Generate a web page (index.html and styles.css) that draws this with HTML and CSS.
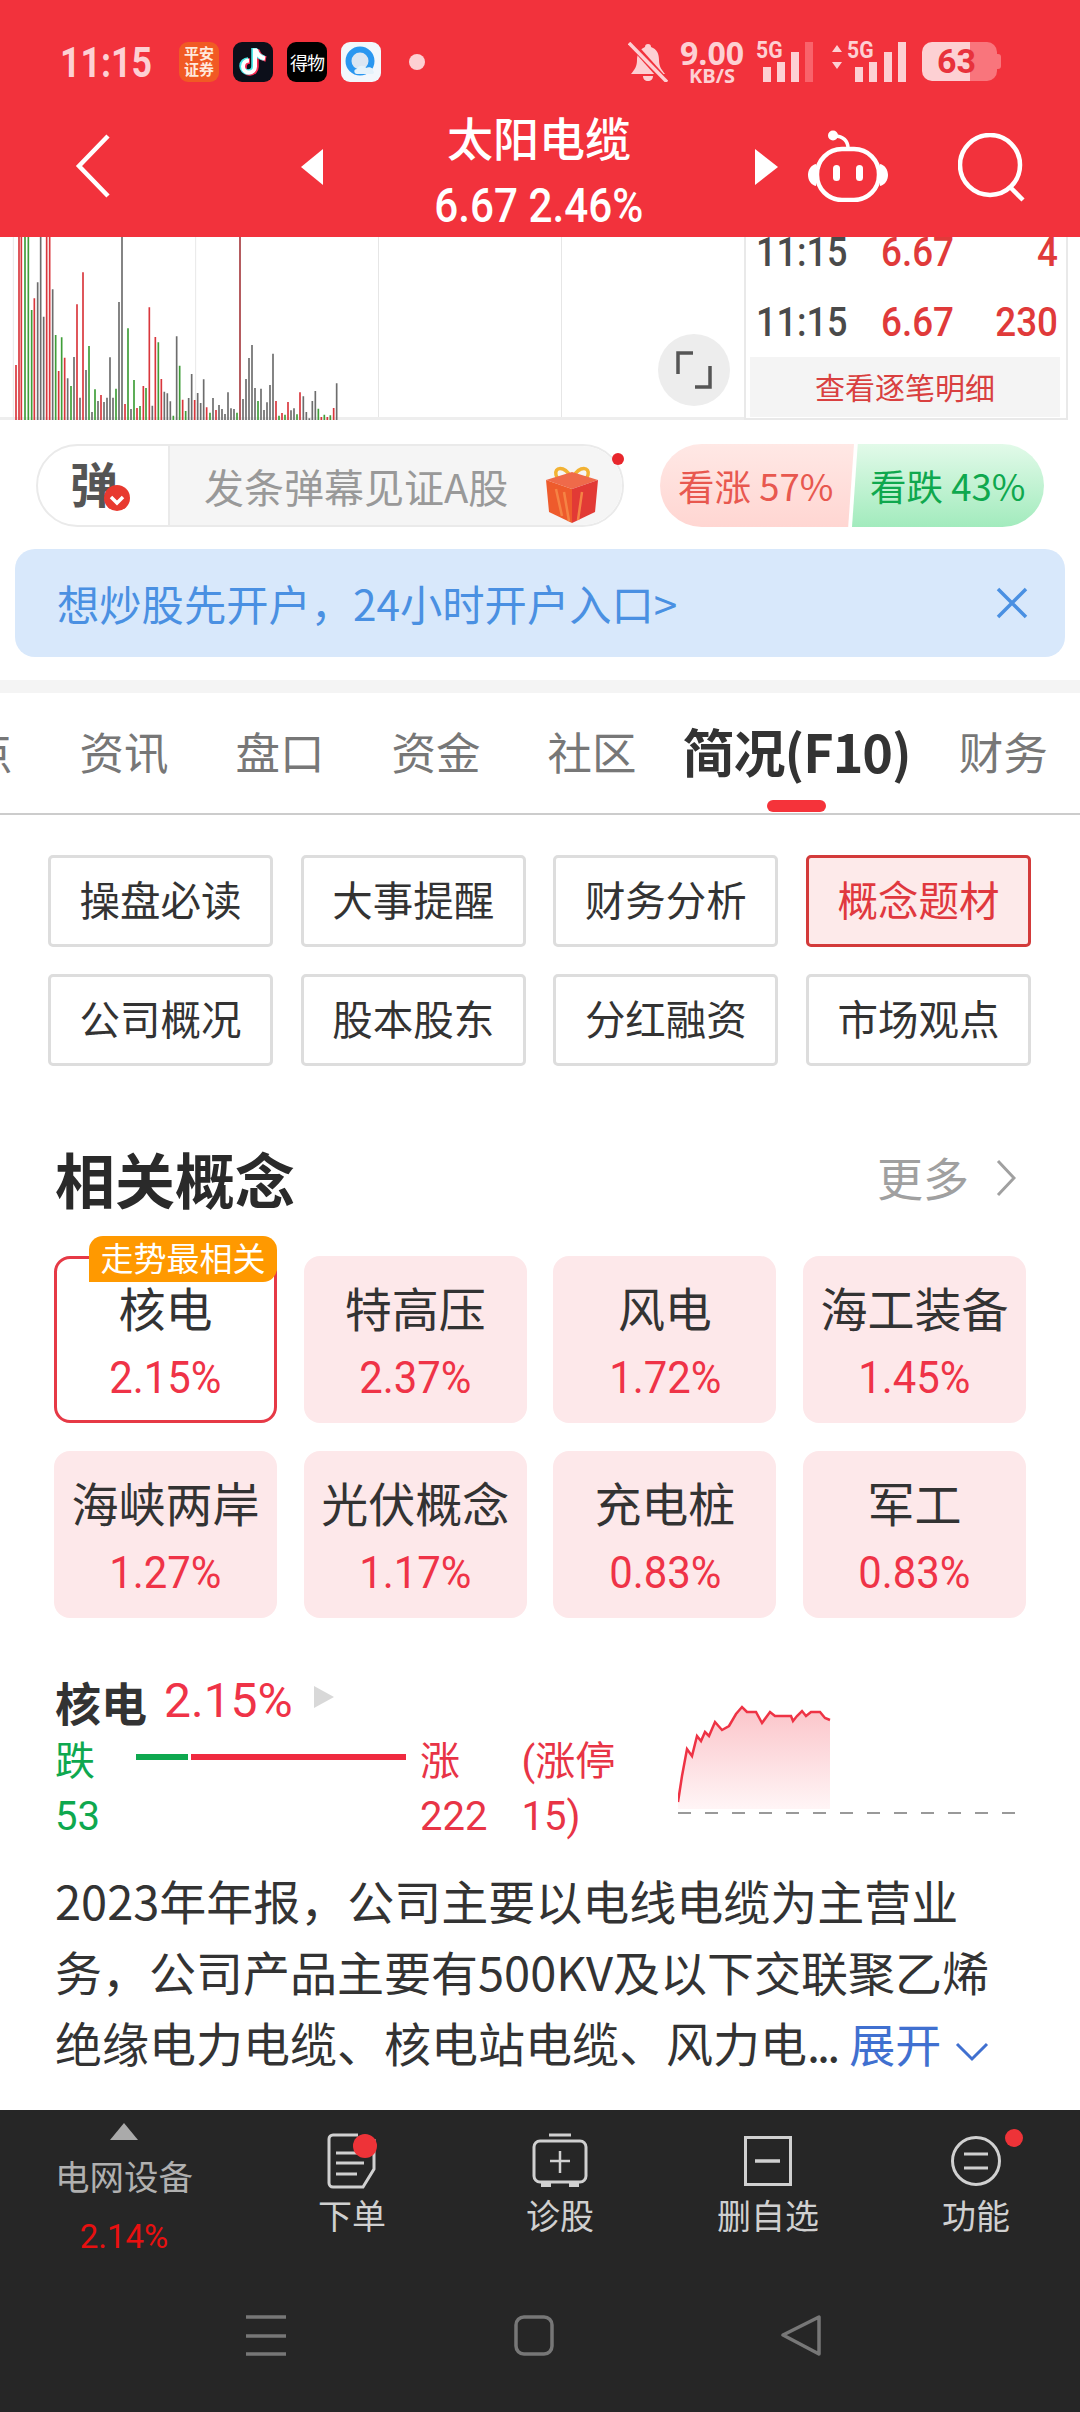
FILE: index.html
```html
<!DOCTYPE html>
<html lang="zh-CN">
<head>
<meta charset="utf-8">
<title>太阳电缆</title>
<link rel="stylesheet" href="styles.css">
</head>
<body>
<div class="page">
  <header class="header">
    <div class="status">
      <span class="time">11:15</span>
      <div class="apps">
        <span class="app app-pa">平安<br>证券</span>
        <span class="app app-tk"><svg viewBox="0 0 40 40" width="40" height="40"><path d="M23 7v18a6 6 0 1 1-6-6" fill="none" stroke="#ff2d55" stroke-width="5.5"/><path d="M24 8c1 5 4 8 9 9" fill="none" stroke="#ff2d55" stroke-width="5.5"/><path d="M21 6v18a6 6 0 1 1-6-6" fill="none" stroke="#4de8e8" stroke-width="5.5"/><path d="M22 7c1 5 4 8 9 9" fill="none" stroke="#4de8e8" stroke-width="5.5"/><path d="M22 6.500v18a6 6 0 1 1-6-6" fill="none" stroke="#fff" stroke-width="4"/><path d="M23 7.500c1 5 4 8 9 9" fill="none" stroke="#fff" stroke-width="4"/></svg></span>
        <span class="app app-dw">得物</span>
        <span class="app app-qq"><svg viewBox="0 0 40 40" width="40" height="40"><circle cx="19" cy="19" r="11.500" fill="#dbe6f2" stroke="#2a97f0" stroke-width="6"/><path d="M16 32c-3 0-4-5 0-5 1-4 8-4 9-1 3-2 8 0 7 3 2 1 1 3-1 3z" fill="#e4f2fb"/></svg></span>
      </div>
      <span class="dot"></span>
      <div class="sys">
        <svg class="bell" viewBox="0 0 40 40" width="40" height="40"><path d="M20 2c2 0 3 1 3 3 6 2 8 7 8 13 0 6 2 9 6 14H3c4-5 6-8 6-14 0-6 3-11 8-13 0-2 1-3 3-3zM15 34h10c0 3-2 5-5 5s-5-2-5-5z" fill="#fdd0d3"/><path d="M3 1l35 39" stroke="#f2323c" stroke-width="7"/><path d="M1 1l38 39" stroke="#fdd0d3" stroke-width="3.500"/></svg>
        <div class="speed"><span class="speed-n">9.00</span><span class="speed-u">KB/S</span></div>
        <div class="sig sig-a">
          <span class="g5">5G</span>
          <svg viewBox="0 0 52 40" width="52" height="40"><path d="M1 25h8v15H1zM15 20h8v20h-8zM29 10h8v30h-8z" fill="#fdd0d3"/><path d="M43 0h8v40h-8z" fill="#f9636b"/></svg>
        </div>
        <div class="sig sig-b">
          <svg class="arrows" viewBox="0 0 12 28" width="12" height="28"><path d="M6 2l5 7H1zM6 26l5-7H1z" fill="#fdd0d3"/></svg>
          <span class="g5">5G</span>
          <svg viewBox="0 0 52 40" width="52" height="40"><path d="M1 25h8v15H1zM15 20h8v20h-8zM30 10h8v30h-8zM44 0h8v40h-8z" fill="#fdd0d3"/></svg>
        </div>
        <div class="batt"><span class="batt-n">63</span></div>
      </div>
    </div>
    <div class="nav">
      <svg class="back" viewBox="0 0 36 66" width="36" height="66"><path d="M33 3L4 33l29 30" fill="none" stroke="#fff" stroke-width="4.500"/></svg>
      <svg class="tri-l" viewBox="0 0 22 36" width="22" height="36"><path d="M22 0v36L0 18z" fill="#fff"/></svg>
      <div class="title">
        <div class="title-name">太阳电缆</div>
        <div class="title-quote"><span>6.67 2.46%</span></div>
      </div>
      <svg class="tri-r" viewBox="0 0 23 36" width="23" height="36"><path d="M0 0v36l23-18z" fill="#fff"/></svg>
      <svg class="robot" viewBox="0 0 80 72" width="80" height="72"><circle cx="25" cy="5.500" r="5" fill="#fff"/><path d="M27 6c8 0 13 5 13 12" fill="none" stroke="#fff" stroke-width="3.500"/><rect x="9" y="19" width="62" height="51" rx="25" fill="none" stroke="#fff" stroke-width="4.500"/><path d="M8 34c-5 1-8 6-8 11s3 10 8 11zM72 34c5 1 8 6 8 11s-3 10-8 11z" fill="#fff"/><rect x="25" y="35" width="7" height="16" rx="3.500" fill="#fff"/><rect x="48" y="35" width="7" height="16" rx="3.500" fill="#fff"/></svg>
      <svg class="search" viewBox="0 0 68 70" width="68" height="70"><circle cx="32" cy="32" r="30" fill="none" stroke="#fff" stroke-width="4.500"/><path d="M52 54l13 13" stroke="#fff" stroke-width="4.500"/></svg>
    </div>
  </header>

  <section class="market">
    <div class="chart">
      <svg class="vol" viewBox="0 0 1080 570" width="360" height="190" preserveAspectRatio="none">
        <path d="M40 0V570M587 0V570" stroke="#e8e8e8" stroke-width="3"/>
        <path fill="none" stroke="#d9363c" stroke-width="5" d="M48 405V570M57 0V570M64 0V570M103 205V570M140 0V570M149 0V570M176 423V570M194 383V570M231 223V570M249 127V570M303 495V570M375 522V570M411 534V570M430 468V570M448 232V570M466 321V570M484 447V570M548 509V570M584 510V570M620 532V570M648 540V570M828 513V570M846 549V570M864 516V570M900 487V570M964 561V570M982 561V570M1001 534V570"/>
        <path fill="none" stroke="#b55c60" stroke-width="6" d="M720 0V570"/>
        <path fill="none" stroke="#3f9e38" stroke-width="5" d="M75 0V570M85 0V570M95 240V570M167 315V570M185 322V570M213 468V570M267 348V570M285 478V570M348 476V570M384 295V570M402 450V570M420 528V570M438 474V570M475 337V570M520 557V570M539 407V570M557 543V570M630 548V570M711 548V570M774 513V570M837 557V570M855 554V570M891 553V570M955 536V570M973 554V570M991 556V570"/>
        <path fill="none" stroke="#6d6d6d" stroke-width="5" d="M113 157V570M122 0V570M131 260V570M158 178V570M203 445V570M222 381V570M240 503V570M258 420V570M276 546V570M294 513V570M312 516V570M321 503V570M330 382V570M339 503V570M357 216V570M366 0V570M393 537V570M457 527V570M493 485V570M502 490V570M511 514V570M530 319V570M566 504V570M575 432V570M593 489V570M602 519V570M611 448V570M639 504V570M657 525V570M666 537V570M675 552V570M684 487V570M693 535V570M702 537V570M729 507V570M738 447V570M747 384V570M756 345V570M765 474V570M783 476V570M792 540V570M801 517V570M810 465V570M819 371V570M873 541V570M882 535V570M910 499V570M919 546V570M928 565V570M937 513V570M946 483V570M1010 460V570"/>
      </svg>
      <div class="grid-line grid-a"></div>
      <div class="grid-line grid-b"></div>
      <button class="expand"><svg viewBox="0 0 36 40" width="36" height="40"><path d="M2 24V3h15M34 16v21H19" fill="none" stroke="#555" stroke-width="3.500"/></svg></button>
    </div>
    <div class="ticks">
      <div class="tick"><span class="t-time">11:15</span><span class="t-price">6.67</span><span class="t-vol">4</span></div>
      <div class="tick"><span class="t-time">11:15</span><span class="t-price">6.67</span><span class="t-vol">230</span></div>
      <div class="tick-more">查看逐笔明细</div>
    </div>
  </section>

  <section class="engage">
    <div class="danmu">
      <div class="danmu-l"><span class="danmu-c">弹</span><svg class="danmu-ok" viewBox="0 0 26 26" width="26" height="26"><circle cx="13" cy="13" r="13" fill="#e8392f"/><path d="M7 12l6 6 6-6" fill="none" stroke="#fff" stroke-width="3.500"/></svg></div>
      <div class="danmu-r">
        <span class="danmu-t">发条弹幕见证A股</span>
        <svg class="gift" viewBox="0 0 56 58" width="56" height="58"><path d="M27 12C20 0 10 2 12 10c1 5 9 5 15 4zM29 12C36 0 46 2 44 10c-1 5-9 5-15 4z" fill="none" stroke="#f2b233" stroke-width="3.500"/><path d="M2 15l26-8 26 8-26 9z" fill="#ef6a4a"/><path d="M2 15l26 9v34L5 47z" fill="#ee5b2c"/><path d="M54 15L28 24v34l23-11z" fill="#e23a35"/><path d="M12 24l6 27M20 27l5 29M38 27l-4 28" stroke="#f58344" stroke-width="2.500"/></svg>
      </div>
      <span class="danmu-dot"></span>
    </div>
    <div class="vote">
      <div class="vote-up">看涨 57%</div>
      <div class="vote-down">看跌 43%</div>
    </div>
  </section>

  <section class="banner">
    <span class="banner-t">想炒股先开户，24小时开户入口&gt;</span>
    <svg class="banner-x" viewBox="0 0 32 32" width="32" height="32"><path d="M2 2l28 28M30 2L2 30" stroke="#4a90e2" stroke-width="3.500"/></svg>
  </section>

  <div class="sep"></div>

  <nav class="tabs">
    <span class="tab tab-cut">点</span>
    <span class="tab">资讯</span>
    <span class="tab">盘口</span>
    <span class="tab">资金</span>
    <span class="tab">社区</span>
    <span class="tab tab-on">简况(F10)</span>
    <span class="tab">财务</span>
  </nav>

  <section class="subs">
    <a class="sub">操盘必读</a><a class="sub">大事提醒</a><a class="sub">财务分析</a><a class="sub sub-on">概念题材</a>
    <a class="sub">公司概况</a><a class="sub">股本股东</a><a class="sub">分红融资</a><a class="sub">市场观点</a>
  </section>

  <section class="concept-head">
    <h2 class="concept-h">相关概念</h2>
    <div class="more"><span class="more-t">更多</span><svg viewBox="0 0 20 38" width="20" height="38"><path d="M2 2l16 17L2 36" fill="none" stroke="#a0a0a0" stroke-width="3"/></svg></div>
  </section>

  <section class="cards">
    <div class="card card-on"><span class="badge">走势最相关</span><div class="c-name">核电</div><div class="c-pct"><span>2.15%</span></div></div>
    <div class="card"><div class="c-name">特高压</div><div class="c-pct"><span>2.37%</span></div></div>
    <div class="card"><div class="c-name">风电</div><div class="c-pct"><span>1.72%</span></div></div>
    <div class="card"><div class="c-name">海工装备</div><div class="c-pct"><span>1.45%</span></div></div>
    <div class="card"><div class="c-name">海峡两岸</div><div class="c-pct"><span>1.27%</span></div></div>
    <div class="card"><div class="c-name">光伏概念</div><div class="c-pct"><span>1.17%</span></div></div>
    <div class="card"><div class="c-name">充电桩</div><div class="c-pct"><span>0.83%</span></div></div>
    <div class="card"><div class="c-name">军工</div><div class="c-pct"><span>0.83%</span></div></div>
  </section>

  <section class="detail">
    <div class="detail-l">
      <div class="d-head"><b class="d-name">核电</b><span class="d-pct">2.15%</span><svg viewBox="0 0 20 22" width="20" height="22"><path d="M0 0v22l20-11z" fill="#d8d8d8"/></svg></div>
      <div class="breadth">
        <div class="b-col b-down">跌<br>53</div>
        <div class="b-bar"><i class="b-g"></i><i class="b-r"></i></div>
        <div class="b-col b-up">涨<br>222</div>
        <div class="b-col b-up b-stop">(涨停<br>15)</div>
      </div>
    </div>
    <svg class="mini" viewBox="678 1700 340 120" width="340" height="120">
      <defs><linearGradient id="miniFill" x1="0" y1="0" x2="0" y2="1"><stop offset="0" stop-color="#fbc4c9"/><stop offset="1" stop-color="#fff5f6"/></linearGradient></defs>
      <path fill="url(#miniFill)" d="M678 1810V1803L682 1777 687 1750 692 1757 697 1737 701 1742 705 1733 709 1737 715 1723 722 1731 729 1727 736 1715 742 1708 747 1713 756 1713 762 1724 770 1713 775 1717 791 1717 793 1722 797 1717 802 1712 806 1717 811 1713 820 1713 825 1719 830 1721V1810Z"/>
      <path fill="none" stroke="#ee3345" stroke-width="2.500" d="M678 1803L682 1777 687 1750 692 1757 697 1737 701 1742 705 1733 709 1737 715 1723 722 1731 729 1727 736 1715 742 1708 747 1713 756 1713 762 1724 770 1713 775 1717 791 1717 793 1722 797 1717 802 1712 806 1717 811 1713 820 1713 825 1719 830 1721"/>
      <path d="M678 1814H1016" stroke="#999" stroke-width="2" stroke-dasharray="13 14"/>
    </svg>
  </section>

  <p class="intro">2023年年报，公司主要以电线电缆为主营业<br>务，公司产品主要有500KV及以下交联聚乙烯<br>绝缘电力电缆、核电站电缆、风力电<span class="intro-dots">...</span><span class="intro-more">展开</span><svg class="intro-chev" viewBox="0 0 34 20" width="34" height="20"><path d="M2 2l15 15L32 2" fill="none" stroke="#4070d0" stroke-width="3"/></svg></p>

  <footer class="bottom">
    <div class="tools">
      <div class="tool tool-idx">
        <svg viewBox="0 0 28 17" width="28" height="17"><path d="M14 0l14 17H0z" fill="#aaa"/></svg>
        <span class="idx-n">电网设备</span>
        <span class="idx-p">2.14%</span>
      </div>
      <div class="tool">
        <span class="t-ico"><svg viewBox="0 0 50 56" width="50" height="56"><path d="M31 2H6a4 4 0 0 0-4 4v44a4 4 0 0 0 4 4h30l11-18V6" fill="none" stroke="#d0d0d0" stroke-width="3"/><path d="M9 20h21M9 30h28M9 41h21" stroke="#d0d0d0" stroke-width="3"/><ellipse cx="38" cy="13" rx="12" ry="12" fill="#ee3338"/></svg></span>
        <span class="t-lab">下单</span>
      </div>
      <div class="tool">
        <span class="t-ico"><svg viewBox="0 0 56 56" width="56" height="56"><path d="M17 2h22" stroke="#d0d0d0" stroke-width="3"/><rect x="2" y="8" width="52" height="41" rx="6" fill="none" stroke="#d0d0d0" stroke-width="3"/><path d="M28 18v22M18 28h20" stroke="#d0d0d0" stroke-width="2.500"/><path d="M9 50h10v4H9zM37 50h10v4H37z" fill="#d0d0d0"/></svg></span>
        <span class="t-lab">诊股</span>
      </div>
      <div class="tool">
        <span class="t-ico"><svg viewBox="0 0 48 50" width="48" height="50"><rect x="1.500" y="1.500" width="45" height="47" fill="none" stroke="#d0d0d0" stroke-width="3"/><path d="M11 25h25" stroke="#d0d0d0" stroke-width="3.500"/></svg></span>
        <span class="t-lab">删自选</span>
      </div>
      <div class="tool">
        <span class="t-ico"><svg viewBox="0 0 50 52" width="50" height="52"><circle cx="25" cy="26" r="23.500" fill="none" stroke="#d0d0d0" stroke-width="3"/><path d="M13 19h24M13 33h24" stroke="#d0d0d0" stroke-width="3"/></svg><span class="t-badge"></span></span>
        <span class="t-lab">功能</span>
      </div>
    </div>
    <div class="sysnav">
      <svg viewBox="0 0 42 41" width="42" height="41"><path d="M1 2h40M1 21h40M1 39h40" stroke="#777" stroke-width="3.500"/></svg>
      <svg viewBox="0 0 40 41" width="40" height="41"><rect x="2" y="2" width="36" height="37" rx="8" fill="none" stroke="#777" stroke-width="3.500"/></svg>
      <svg viewBox="0 0 40 41" width="40" height="41"><path d="M38 2v37L2 20z" fill="none" stroke="#777" stroke-width="3.500" stroke-linejoin="round"/></svg>
    </div>
  </footer>
</div>
</body>
</html>
```
FILE: styles.css
```css
* { box-sizing: border-box; }
html, body { margin: 0; padding: 0; }
body { background: #fff; font-family: Roboto, "Noto Sans CJK SC", sans-serif; color: #333; }
.page { width: 1080px; height: 2412px; overflow: hidden; display: flex; flex-direction: column; }
svg { display: block; flex: none; }

.header { height: 237px; background: #f2323c; position: relative; z-index: 2; flex: none; }
.status { height: 104px; padding: 40px 0 0 60px; display: flex; align-items: flex-start; color: #fdd0d3; }
.time { font-size: 43px; font-weight: 700; line-height: 44px; width: 119px; transform: scaleX(.83); transform-origin: left; }
.apps { display: flex; gap: 14px; margin-top: 2px; }
.app { width: 40px; height: 40px; border-radius: 9px; overflow: hidden; display: flex; align-items: center; justify-content: center; text-align: center; }
.app-pa { background: #f15a24; color: #ffe9dc; font-size: 15px; line-height: 16px; font-weight: 700; }
.app-tk { background: #0c0f1a; }
.app-dw { background: #000; color: #fff; font-size: 18px; letter-spacing: -1px; }
.app-qq { background: #f2f7fc; }
.dot { width: 16px; height: 16px; border-radius: 50%; background: #fdd0d3; margin: 14px 0 0 28px; }
.sys { display: flex; align-items: flex-start; margin-left: 203px; margin-top: 2px; }
.speed { margin-left: 11px; width: 66px; display: flex; flex-direction: column; align-items: center; font-weight: 700; font-family: "Open Sans", sans-serif; }
.speed-n { font-size: 32px; line-height: 22px; }
.speed-u { font-size: 20px; line-height: 18px; margin-top: 3px; }
.sig { position: relative; height: 40px; display: flex; }
.sig-a { margin-left: 17px; width: 52px; }
.g5 { position: absolute; top: 0; font-size: 23px; line-height: 17px; font-weight: 700; transform: scaleX(.92); transform-origin: left; }
.sig-a .g5 { left: -6px; }
.sig-b { margin-left: 17px; width: 75px; justify-content: flex-end; }
.sig-b .g5 { left: 16px; }
.arrows { position: absolute; left: 0; top: 1px; }
.batt { margin-left: 16px; width: 75px; height: 39px; border-radius: 10px; background: linear-gradient(90deg, #fdd0d3 0 48px, #f9757c 48px); text-align: center; position: relative; }
.batt::after { content: ""; position: absolute; right: -4px; top: 12px; width: 4px; height: 15px; border-radius: 0 3px 3px 0; background: #f9757c; }
.batt-n { font-size: 34px; line-height: 39px; font-weight: 700; color: #e8323c; display: block; margin-right: 6px; }

.nav { height: 133px; display: flex; align-items: flex-start; padding-left: 75px; color: #fff; }
.back { margin-top: 29px; }
.tri-l { margin: 45px 0 0 190px; }
.title { width: 432px; text-align: center; padding-top: 5px; font-family: "Noto Sans CJK SC", sans-serif; }
.title-name { font-size: 46px; line-height: 54px; font-weight: 500; }
.title-quote { font-family: Roboto, sans-serif; font-size: 48px; line-height: 50px; margin-top: 18px; font-weight: 500; }
.title-quote span { display: inline-block; transform: scaleX(.88); }
.tri-r { margin-top: 45px; }
.robot { margin: 26px 0 0 30px; }
.search { margin: 29px 0 0 70px; }

.market { height: 183px; display: flex; flex: none; overflow: hidden; position: relative; }
.chart { width: 744px; position: relative; border-bottom: 3px solid #eee; }
.vol { position: absolute; left: 0; top: -7px; }
.grid-line { position: absolute; top: 0; bottom: 0; width: 1px; background: #e6e6e6; }
.grid-a { left: 378px; }
.grid-b { left: 561px; }
.expand { position: absolute; left: 658px; top: 97px; width: 72px; height: 72px; border: 0; border-radius: 50%; background: #ededed; display: flex; align-items: center; justify-content: center; padding: 0; }
.ticks { width: 324px; border-left: 2px solid #e9e9e9; border-right: 2px solid #e9e9e9; border-bottom: 2px solid #e9e9e9; margin-top: -20px; height: 203px; padding: 0 6px 0 4px; }
.tick { height: 70px; display: flex; align-items: center; font-size: 40px; font-weight: 500; }
.t-time { color: #4a4a4a; width: 125px; margin-left: 6px; transform: scaleX(.9); transform-origin: left; }
.t-price { color: #e03a3a; width: 80px; transform: scaleX(.92); transform-origin: left; }
.t-vol { color: #e03a3a; flex: 1; text-align: right; margin-right: 2px; transform: scaleX(.92); transform-origin: right; }
.tick-more { height: 60px; background: #f4f4f4; color: #d94040; font: 30px/58px "Noto Sans CJK SC", sans-serif; text-align: center; }

.engage { height: 83px; margin-top: 24px; padding-left: 36px; display: flex; flex: none; }
.danmu { width: 588px; display: flex; border: 2px solid #eaeaea; border-radius: 42px; position: relative; }
.danmu-l { width: 132px; position: relative; border-right: 2px solid #eaeaea; }
.danmu-c { position: absolute; left: 32px; top: 6px; font: 700 48px/60px "Noto Sans CJK SC", sans-serif; color: #555; }
.danmu-ok { position: absolute; left: 66px; top: 39px; }
.danmu-r { flex: 1; background: #f5f5f5; border-radius: 0 41px 41px 0; display: flex; align-items: center; justify-content: space-between; padding: 0 22px 0 34px; }
.danmu-t { font: 40px/1 "Noto Sans CJK SC", sans-serif; color: #999; }
.gift { margin-top: 16px; }
.danmu-dot { position: absolute; right: -2px; top: 7px; width: 12px; height: 12px; border-radius: 50%; background: #e8262c; }
.vote { margin-left: 36px; width: 384px; display: flex; font: 36.500px/83px "Noto Sans CJK SC", sans-serif; }
.vote-up { width: 194px; background: linear-gradient(180deg, #ffe8e5, #ffd6d2); color: #e8584f; border-radius: 42px 0 0 42px; clip-path: polygon(0 0, 100% 0, 97% 100%, 0 100%); padding-left: 18px; white-space: nowrap; }
.vote-down { width: 192px; margin-left: -2px; background: linear-gradient(180deg, #e2fae9, #a2ebbd); color: #0fa84e; border-radius: 0 42px 42px 0; clip-path: polygon(3% 0, 100% 0, 100% 100%, 0 100%); padding-left: 18px; white-space: nowrap; }

.banner { height: 108px; margin: 22px 15px 0; flex: none; background: #d8e8fb; border-radius: 20px; display: flex; align-items: center; justify-content: space-between; padding: 0 37px 0 42px; }
.banner-t { font: 42.300px/1 "Noto Sans CJK SC", sans-serif; color: #4a90e2; }
.sep { height: 13px; margin-top: 23px; background: #f4f4f4; flex: none; }

.tabs { height: 122px; flex: none; display: flex; align-items: center; gap: 67px; padding-bottom: 5px; margin-left: -32px; border-bottom: 2px solid #ccc; position: relative; font-family: "Noto Sans CJK SC", sans-serif; }
.tab { font-size: 44.500px; color: #777; white-space: nowrap; flex: none; }
.tab-on { font: 700 52px/1 "Noto Sans CJK SC", sans-serif; color: #333; margin: 0 -19px 0 -21px; letter-spacing: -1px; position: relative; }
.tab-on::after { content: ""; position: absolute; left: 84px; bottom: -35px; width: 59px; height: 12px; border-radius: 6px; background: #f5333a; }

.subs { display: grid; grid-template-columns: repeat(4, 225px); gap: 27px 27.700px; padding: 40px 0 0 48px; flex: none; font-family: "Noto Sans CJK SC", sans-serif; }
.sub { height: 92px; border: 3px solid #ddd; border-radius: 5px; display: flex; align-items: center; justify-content: center; padding-bottom: 5px; font-size: 40.500px; color: #333; }
.sub-on { border-color: #d33a3a; background: #fdeaea; color: #e0383e; }

.concept-head { display: flex; justify-content: space-between; align-items: center; height: 80px; margin-top: 72px; padding: 0 64px 0 55px; flex: none; font-family: "Noto Sans CJK SC", sans-serif; }
.concept-h { margin: 0; font-size: 60px; line-height: 1; font-weight: 700; color: #2a2a2a; }
.more { display: flex; align-items: center; gap: 27px; color: #a0a0a0; font-size: 46px; }
.more-t { margin-top: -5px; }

.cards { display: grid; grid-template-columns: repeat(4, 223px); gap: 28px 26.700px; padding: 38px 0 0 54px; flex: none; font-family: "Noto Sans CJK SC", sans-serif; }
.card { height: 167px; background: #fde8ea; border-radius: 16px; text-align: center; position: relative; padding-top: 28px; }
.card-on { background: #fff; border: 3px solid #e63946; padding-top: 25px; }
.badge { position: absolute; left: 32px; top: -23px; width: 188px; height: 46px; background: #ff9900; color: #fff; font-size: 33px; line-height: 43px; border-radius: 14px 14px 14px 0; white-space: nowrap; }
.c-name { font-size: 47px; line-height: 46px; color: #333; }
.c-pct { font: 45px/50px Roboto, sans-serif; color: #ef3347; margin-top: 23px; }
.c-pct span { display: inline-block; transform: scaleX(.93); }

.detail { display: flex; height: 229px; padding: 59px 0 0 55px; flex: none; }
.detail-l { width: 623px; }
.d-head { display: flex; align-items: center; height: 48px; }
.d-name { font: 700 46px/48px "Noto Sans CJK SC", sans-serif; color: #333; }
.d-pct { font: 48px/48px Roboto, sans-serif; color: #ef3347; margin-left: 17px; }
.d-head svg { margin: 0 0 8px 21px; }
.breadth { display: flex; margin-top: 9px; font: 40px/55px Roboto, "Noto Sans CJK SC", sans-serif; }
.b-col { white-space: nowrap; }
.b-down { color: #0ea84f; width: 81px; }
.b-up { color: #e83446; }
.b-bar { display: flex; width: 284px; gap: 3px; margin-top: 20px; height: 6px; }
.b-g { width: 52px; background: #0ea84f; }
.b-r { width: 215px; background: #f02a40; }
.b-stop { margin-left: 34px; }
.mini { margin-top: 22px; }

.intro { margin: 0; padding: 17px 0 0 55px; font: 47px/71px "Noto Sans CJK SC", sans-serif; color: #333; white-space: nowrap; flex: none; }
.intro-dots { letter-spacing: -3px; }
.intro-more { color: #4070d0; font-size: 46px; margin-left: 12px; }
.intro-chev { display: inline-block; margin-left: 14px; }

.bottom { height: 302px; margin-top: auto; flex: none; background: #262626; }
.tools { display: flex; height: 181px; padding-top: 13px; }
.tool { width: 208px; display: flex; flex-direction: column; align-items: center; color: #d0d0d0; font: 34px/1 "Noto Sans CJK SC", sans-serif; position: relative; }
.tool-idx { width: 248px; flex: none; color: #b0b0b0; }
.t-ico { height: 60px; margin-top: 8px; display: flex; align-items: center; position: relative; }
.t-lab { margin-top: 7px; }
.t-badge { position: absolute; right: -22px; top: -2px; width: 18px; height: 18px; border-radius: 50%; background: #ee3338; }
.idx-n { margin-top: 18px; font-size: 34.500px; }
.idx-p { margin-top: 27px; color: #e81010; font: 33px/1 Roboto, sans-serif; }
.sysnav { display: flex; padding: 24px 0 0 245px; gap: 227px; }
```
